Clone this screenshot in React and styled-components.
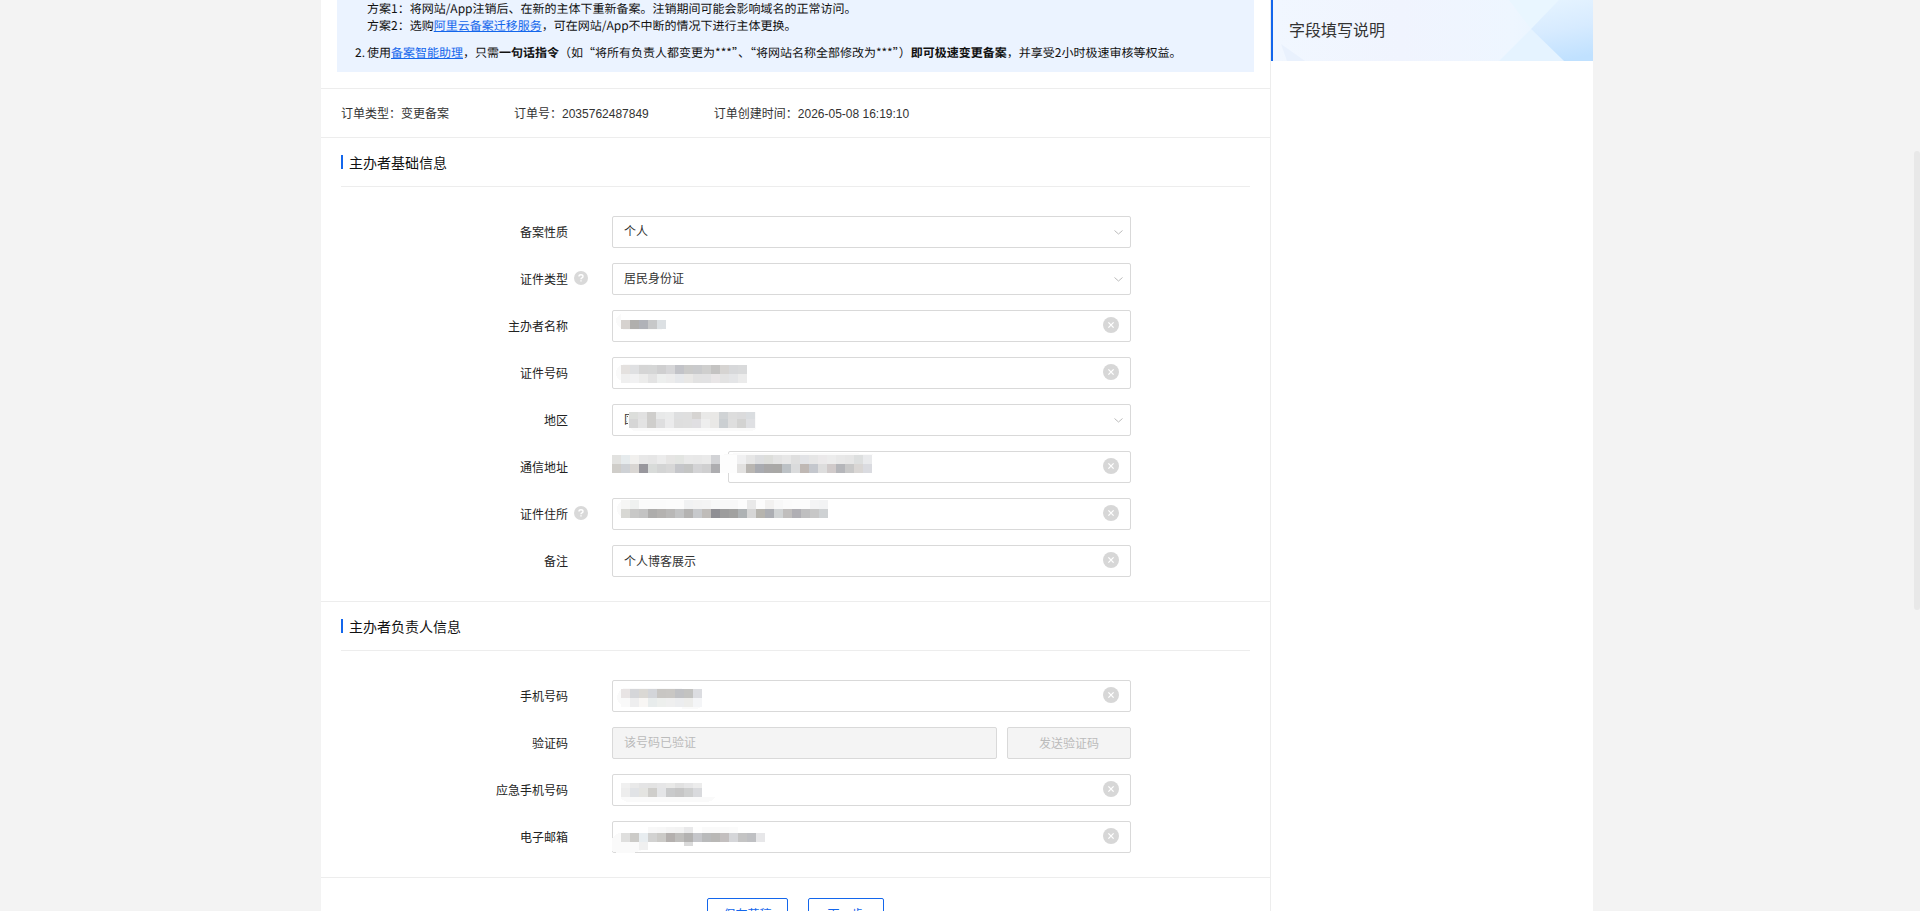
import React from "react";
import styled, { createGlobalStyle } from "styled-components";

const GlobalStyle = createGlobalStyle`
  * {
    box-sizing: border-box;
  }
  body {
    margin: 0;
    background: #f3f3f3;
    color: #222;
    font-size: 12px;
    font-family: "Liberation Sans", "Noto Sans CJK SC", sans-serif;
  }
  input, select, button {
    font: inherit;
    color: inherit;
  }
`;

const Page = styled.div`
  height: 100vh;
  overflow: hidden;
  padding-right: 6px;
`;
const ScrollThumb = styled.div`
  position: fixed;
  right: 0;
  top: 151px;
  width: 6px;
  height: 459px;
  border-radius: 3px;
  background: #e8e8e8;
`;
const Container = styled.div`
  display: flex;
  max-width: 1272px;
  min-height: 100%;
  margin: 0 auto;
  background: #fff;
`;
const Main = styled.main`
  flex: 1;
  min-width: 0;
  border-right: 1px solid #ededed;
`;

const Notice = styled.div`
  display: flex;
  flex-direction: column;
  gap: 10px;
  margin: 0 16px;
  padding: 0 18px 11px;
  background: #ebf3ff;
  color: #111;
  font-family: "Noto Sans CJK SC", sans-serif;
  line-height: 17px;
  text-rendering: geometricPrecision;
`;
const NoticeItem = styled.div`
  display: grid;
  grid-template-columns: 12px 1fr;
`;
const NoticeLink = styled.a`
  color: #1366ec;
  text-decoration: underline;
`;

const OrderBar = styled.div`
  display: flex;
  align-items: center;
  gap: 65px;
  height: 50px;
  margin-top: 16px;
  padding: 0 20px 2px;
  border-top: 1px solid #ededed;
  border-bottom: 1px solid #ededed;
  color: #333;
`;

const Section = styled.section`
  padding: 0 20px 24px;
  border-bottom: 1px solid #ededed;
`;
const SectionTitle = styled.h2`
  display: flex;
  align-items: center;
  gap: 6px;
  height: 49px;
  margin: 0 0 29px;
  border-bottom: 1px solid #ededed;
  color: #111;
  font-size: 14px;
  font-weight: normal;

  &::before {
    content: "";
    width: 2px;
    height: 14px;
    background: #1366ec;
  }
`;
const Rows = styled.div`
  display: flex;
  flex-direction: column;
  gap: 15px;
`;
const Row = styled.div`
  display: grid;
  grid-template-columns: 227px 32px minmax(0, 519px);
  column-gap: 6px;
  align-items: center;
  padding-right: 119px;

  & > :last-child {
    grid-column: 3;
  }
`;
const Label = styled.label`
  padding-bottom: 2px;
  text-align: right;
`;
const Help = styled.svg`
  display: block;
  width: 14px;
  height: 16px;
  padding-bottom: 2px;
`;

const Control = styled.div`
  position: relative;
  display: flex;
  gap: 10px;
`;
const Prefix = styled.span`
  width: 106px;
`;
const Box = styled.div`
  display: flex;
  align-items: center;
  flex: 1;
  min-width: 0;
  height: 32px;
  padding-right: ${(props) => (props.$select ? "7px" : "11px")};
  border: 1px solid #d9d9d9;
  border-radius: 2px;
  background: ${(props) => (props.$disabled ? "#f4f4f4" : "#fff")};
`;
const Input = styled.input`
  flex: 1;
  min-width: 0;
  height: 30px;
  padding: 0 0 1px 11px;
  border: 0;
  outline: 0;
  background: transparent;
  color: #333;

  &::placeholder {
    color: #bbb;
  }
`;
const Select = styled.select`
  flex: 1;
  height: 30px;
  padding: 0 0 0 11px;
  border: 0;
  outline: 0;
  appearance: none;
  background: transparent;
  color: #333;
`;
const Chevron = styled.svg`
  width: 9px;
  height: 5px;
  fill: none;
  stroke: #bbb;
`;
const Clear = styled.button`
  display: flex;
  width: 16px;
  height: 16px;
  margin-bottom: 2px;
  padding: 0;
  border: 0;
  border-radius: 50%;
  background: #d7d7d7;
  cursor: pointer;
`;
const SendButton = styled.button`
  width: 124px;
  height: 32px;
  padding: 0 0 2px;
  border: 1px solid #d9d9d9;
  border-radius: 2px;
  background: #f4f4f4;
  color: #bbb;
`;
// lies over the control it hides
const Mask = styled.svg`
  position: absolute;
  left: 0;
  top: 0;
  width: 280px;
  height: 34px;
  pointer-events: none;
`;

const Footer = styled.div`
  display: flex;
  justify-content: center;
  gap: 20px;
  padding: 20px;
`;
const ActionButton = styled.button`
  height: 32px;
  padding: 0 ${(props) => (props.$wide ? "19px" : "15px")} 2px;
  border: 1px solid #1366ec;
  border-radius: 2px;
  background: #fff;
  color: #1366ec;
  cursor: pointer;
`;

const Side = styled.aside`
  width: 322px;
`;
const SideHead = styled.div`
  display: grid;
  align-items: center;
  height: 61px;
  border-left: 2px solid #1366ec;
  overflow: hidden;

  & > * {
    grid-area: 1 / 1;
  }
`;
const SideTitle = styled.h3`
  margin: 0;
  padding: 0 16px 4px;
  color: #333;
  font-size: 16px;
  font-weight: normal;
`;

// each strip: x, y, row height, cell colours
const MASKS = {
  name: [[9, 10, 9, "d6d2cf b0afad b0b2b8 c7c8c9 dce0e3"]],
  idNo: [
    [9, 8, 9, "e4e1df dfe0e2 d5d5d5 d5d6d6 cfcfd0 d6d6d8 c2c3c8 cacac9 c9cacc cfcfce c4c3c2 d6d4d2 d7d8da d9dadb"],
    [9, 17, 9, "efefef f1f1f2 ececeb e3e3e3 edefee ececec e6e8eb e9e8e6 e2e2e2 e2e2e3 e9e6e7 e3e3e3 e4e5e7 ebebeb"],
  ],
  area: [
    [17, 8, 7, "dcdedb e1e1e1 cfcecc e8e9e9 eaebeb dedfe0 dfdfdf d6d4d2 e9e9e8 e9e8e6 d0d3d5 dddddd dbdbdc dadde0"],
    [17, 15, 9, "d6d6d6 e3e3e3 cfcecc dededf ebebec dedede dfdfdf e0dfe2 eeeeee e9e8e6 cbcfd2 dedede d3d3d2 dfe0e3"],
  ],
  address: [
    [107, 4, 18, "fdfdfd fdfdfd"],
    [0, 4, 9, "e2e2e0 e6ebed f1f0ee e8e8e8 e6e6e6 ececec e6e5e4 e3e5e2 e9e9e9 e8e8e8 eaeaea d2d3d6"],
    [0, 13, 9, "cfcdc9 ced1d5 d9d6d3 98979d d8dbd9 d3d4d4 d7d7d7 c5c6ca c4c5c4 d3d3d5 cfcfd0 adadb0"],
    [125, 4, 9, "f0f0f1 e6e6e6 dddee0 dddedb e3e3e3 e7e7e7 dfdfdf e2e3e6 e6e6e6 ebe9ea ececec e8e8e8 e6e6e6 dddfdf e9eaec"],
    [125, 13, 9, "e2e1e0 b9b6b2 a9abb1 a9a8a8 a9a8a6 bcc1c5 dadbdc bfb8b4 c4c7cd dddddd d0caca b5b6ba c8c8c8 d9d6d4 dadbe0"],
  ],
  home: [
    [9, 2, 9, "f6f6f5 eff1f0 fbfbfb fbfbfb fbfbfb fcfcfc fcfcfc f1f2f3 f3f3f3 f4f4f4 f7f8f8 f8f8f8 f8f8f8 fcfcfc e9e9e9 fcfcfc f2f1f0 f8f8f8 fbfbfb fcfcfc fcfcfc f4f4f5 f2f3f4"],
    [9, 11, 9, "d8d8d4 c8c8c7 c3c3c3 aeadac b4b2b0 b9b8b7 c2c3c4 b4b3b2 c7c9cc bfbcb9 8f8f94 9d9d9d a1a1a0 aeb2b4 d6d6d6 b6b4ae acaeb3 d0d3d4 c0bebd b0afb4 bfbfc0 c7c7c7 ced1d3"],
  ],
  phone: [
    [9, 9, 9, "e8e4e4 d5d6d9 dad8d4 d3d5d9 c8c6c3 c9c7c4 c0c1c4 c3c3c1 dcdde1"],
    [9, 18, 9, "f9f9f9 eeeeef f8f6f4 e8ecec edefed efefef ecedef ededeb f4f5f7"],
  ],
  backup: [
    [9, 9, 5, "f0f0f0 e9e9e9 e4e4e5 e3e3e3 e6e6e7 e9e9e8 e1e1e1 e6e6e7 ececec"],
    [9, 14, 9, "ededed e1e3e6 e4e4e1 cfcecb e4e5e7 c9cacb c6c6c6 cecfcf d9dadd"],
  ],
  mail: [
    [36, 6, 6, "f8f8f8 f7f7f7 f4f4f4 f3f3f3 e9e9ea fefefe fafafa fafafa fafafa fbfbfb"],
    [9, 12, 9, "dfdfde cccbc8 e8edf0 d2d2d1 cbcac7 b4b0ae bfbebc b3b2b1 c5c6ca b9babb b9b8b6 c3bfbf d5d6d9 c4c4c4 bfc0c3 e7e7e9"],
    [27, 21, 8, "f0f0f0"],
    [72, 21, 4, "dadada"],
  ],
};
const HALOS = {
  name: "M9 4Q4 6 4 11T12 20H50V10H9Z",
  idNo: "M12 7Q4 9 4 16T14 26H40V7Z",
  area: "M22 8Q15 10 15 16T22 27H138Q143 27 144 24V8Z",
  address: "M108 4L125 2H240L268 4Z",
  home: "M12 2Q5 4 5 11T14 20H30V2Z",
  phone: "M12 8Q5 11 5 18T16 27H89L85 29H70V8Z",
  backup: "M9 12V24Q12 28 18 28H92Q101 28 103 23H80Z",
  mail: "M0 30V18Q3 12 9 12H30V29L22 32H5Z",
};

function Mosaic({ name }) {
  return (
    <Mask aria-hidden="true" shapeRendering="crispEdges">
      <path d={HALOS[name]} fill="#fafafa" />
      {MASKS[name].map(([x, y, h, cells]) =>
        cells
          .split(" ")
          .map((c, i) => (
            <rect key={`${x}-${y}-${i}`} x={x + i * 9} y={y} width="9" height={h} fill={`#${c}`} />
          ))
      )}
    </Mask>
  );
}

function HelpIcon() {
  return (
    <Help viewBox="0 0 14 14">
      <circle cx="7" cy="7" r="7" fill="#d9d9d9" />
      <path d="M5 5.5Q5 3.8 7 3.8T9 5.5Q9 6.4 8 6.9T7 8.3M7 9.3V10.6" fill="none" stroke="#fff" strokeWidth="1.4" />
    </Help>
  );
}

function Field({ id, label, help, children }) {
  return (
    <Row>
      <Label htmlFor={id}>{label}</Label>
      {help && <HelpIcon />}
      <Control>{children}</Control>
    </Row>
  );
}

function SelectBox({ id, value }) {
  return (
    <Box $select>
      <Select id={id} defaultValue={value}>
        <option>{value}</option>
      </Select>
      <Chevron viewBox="0 0 9 5">
        <path d="M0.5 0.5L4.5 4L8.5 0.5" />
      </Chevron>
    </Box>
  );
}

function TextBox({ id, value = "" }) {
  return (
    <Box>
      <Input id={id} type="text" defaultValue={value} />
      <Clear type="button" aria-label="清除">
        <svg width="16" height="16" viewBox="0 0 16 16">
          <path d="M5.4 5.4L10.6 10.6M10.6 5.4L5.4 10.6" stroke="#fff" strokeWidth="1.3" />
        </svg>
      </Clear>
    </Box>
  );
}

function NoticeBlock() {
  return (
    <Notice>
      <NoticeItem>
        <span></span>
        <div>
          方案1：将网站/App注销后、在新的主体下重新备案。注销期间可能会影响域名的正常访问。
          <br />
          方案2：选购<NoticeLink href="#">阿里云备案迁移服务</NoticeLink>
          ，可在网站/App不中断的情况下进行主体更换。
        </div>
      </NoticeItem>
      <NoticeItem>
        <span>2.</span>
        <div>
          使用<NoticeLink href="#">备案智能助理</NoticeLink>，只需<b>一句话指令</b>
          （如“将所有负责人都变更为***”、“将网站名称全部修改为***”）<b>即可极速变更备案</b>
          ，并享受2小时极速审核等权益。
        </div>
      </NoticeItem>
    </Notice>
  );
}

function SidePanel() {
  return (
    <Side>
      <SideHead>
        <svg width="100%" height="61" viewBox="0 0 320 61" preserveAspectRatio="none" aria-hidden="true">
          <defs>
            <linearGradient id="base">
              <stop offset="0" stopColor="#f1f7ff" />
              <stop offset="0.4" stopColor="#f0f4fe" />
              <stop offset="0.75" stopColor="#eef6ff" />
              <stop offset="1" stopColor="#e3f2ff" />
            </linearGradient>
            <linearGradient id="corner" x1="0.3" y1="0" x2="0.5" y2="1">
              <stop offset="0" stopColor="#e5f3ff" />
              <stop offset="0.5" stopColor="#d7ebff" />
              <stop offset="1" stopColor="#c0e1ff" />
            </linearGradient>
          </defs>
          <rect width="320" height="61" fill="url(#base)" />
          <path d="M8 44L32 61H14Z" fill="#e9f1fd" />
          <path d="M226 61L258 29L291 61Z" fill="#e5f3ff" />
          <path d="M236 0H286L258 29Z" fill="#e9f6ff" />
          <path d="M286 0H320V61H291L258 29Z" fill="url(#corner)" />
        </svg>
        <SideTitle>字段填写说明</SideTitle>
      </SideHead>
    </Side>
  );
}

function App() {
  return (
    <Page>
      <GlobalStyle />
      <Container>
        <Main>
          <NoticeBlock />
          <OrderBar>
            <span>订单类型：变更备案</span>
            <span>订单号：2035762487849</span>
            <span>订单创建时间：2026-05-08 16:19:10</span>
          </OrderBar>
          <Section>
            <SectionTitle>主办者基础信息</SectionTitle>
            <Rows>
              <Field id="nature" label="备案性质">
                <SelectBox id="nature" value="个人" />
              </Field>
              <Field id="idType" label="证件类型" help>
                <SelectBox id="idType" value="居民身份证" />
              </Field>
              <Field id="name" label="主办者名称">
                <TextBox id="name" />
                <Mosaic name="name" />
              </Field>
              <Field id="idNo" label="证件号码">
                <TextBox id="idNo" />
                <Mosaic name="idNo" />
              </Field>
              <Field id="area" label="地区">
                <SelectBox id="area" value="国" />
                <Mosaic name="area" />
              </Field>
              <Field id="address" label="通信地址">
                <Prefix />
                <TextBox id="address" />
                <Mosaic name="address" />
              </Field>
              <Field id="home" label="证件住所" help>
                <TextBox id="home" />
                <Mosaic name="home" />
              </Field>
              <Field id="remark" label="备注">
                <TextBox id="remark" value="个人博客展示" />
              </Field>
            </Rows>
          </Section>
          <Section>
            <SectionTitle>主办者负责人信息</SectionTitle>
            <Rows>
              <Field id="phone" label="手机号码">
                <TextBox id="phone" />
                <Mosaic name="phone" />
              </Field>
              <Field id="code" label="验证码">
                <Box $disabled>
                  <Input id="code" type="text" placeholder="该号码已验证" disabled />
                </Box>
                <SendButton type="button" disabled>
                  发送验证码
                </SendButton>
              </Field>
              <Field id="backup" label="应急手机号码">
                <TextBox id="backup" />
                <Mosaic name="backup" />
              </Field>
              <Field id="mail" label="电子邮箱">
                <TextBox id="mail" />
                <Mosaic name="mail" />
              </Field>
            </Rows>
          </Section>
          <Footer>
            <ActionButton type="button">保存草稿</ActionButton>
            <ActionButton type="button" $wide>
              下一步
            </ActionButton>
          </Footer>
        </Main>
        <SidePanel />
      </Container>
      <ScrollThumb />
    </Page>
  );
}

export default App;
